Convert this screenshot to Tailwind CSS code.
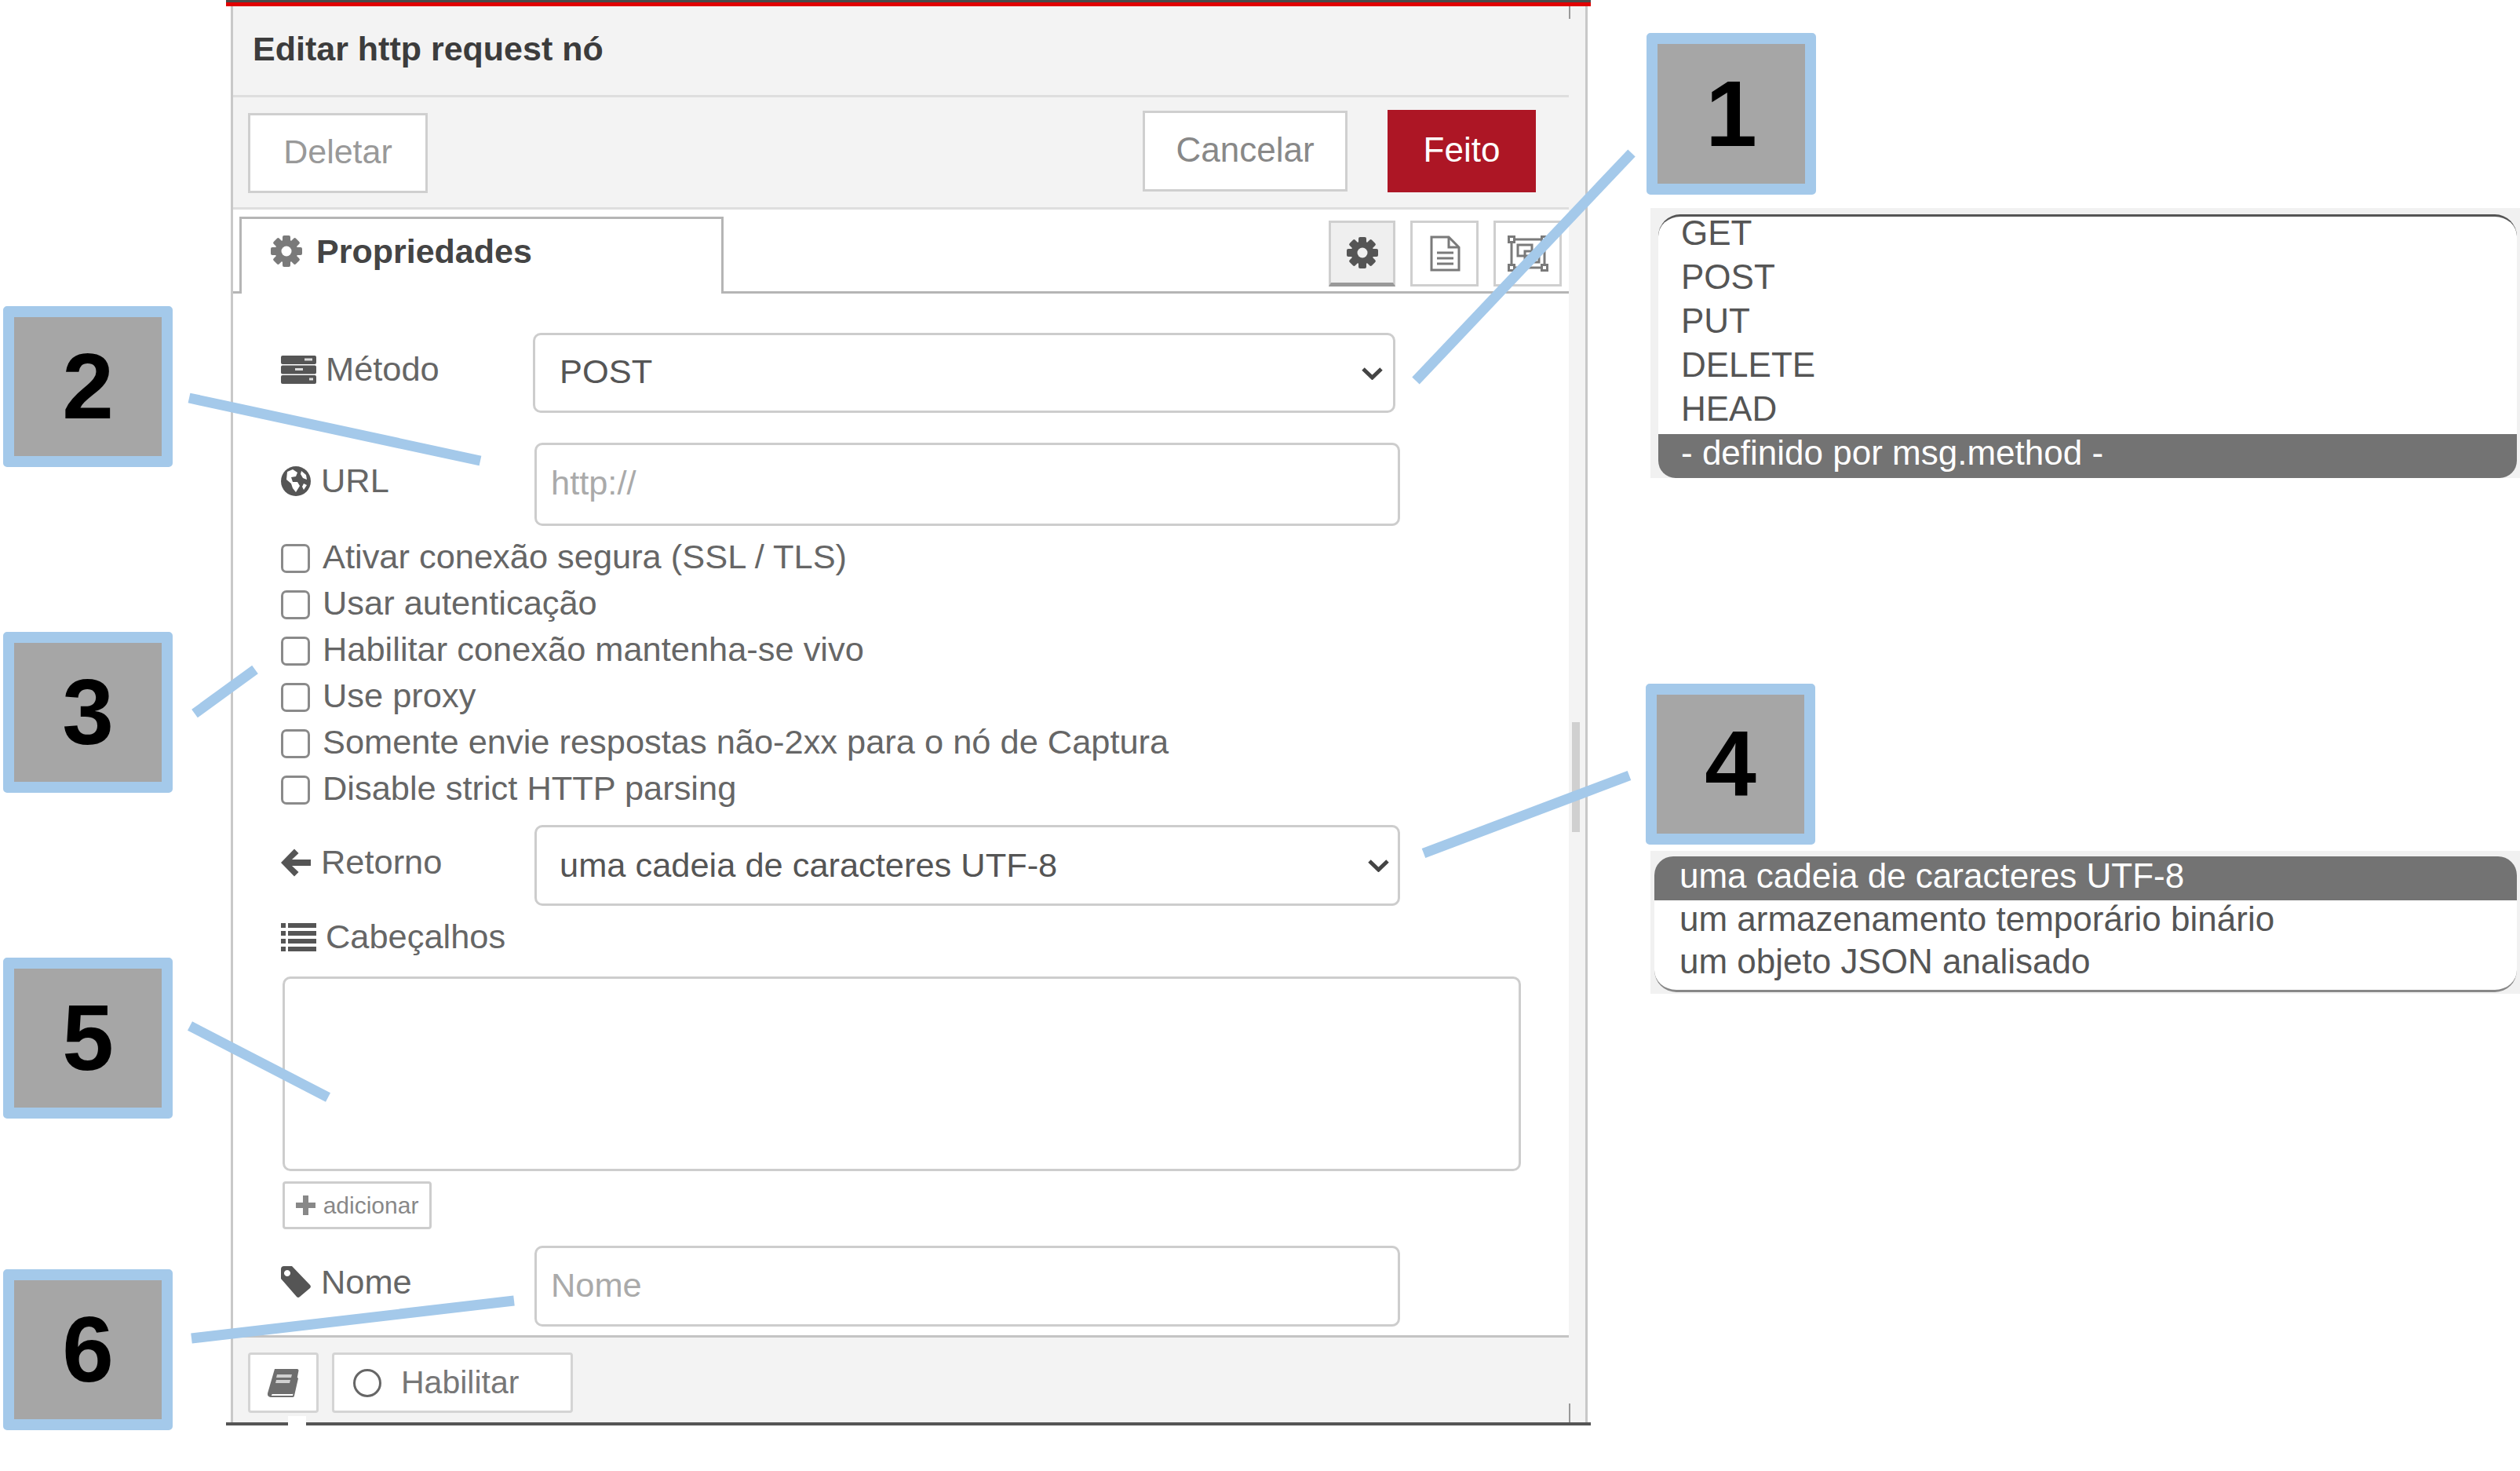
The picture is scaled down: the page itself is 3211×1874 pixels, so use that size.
<!DOCTYPE html>
<html lang="pt">
<head>
<meta charset="utf-8">
<title>Editar http request nó</title>
<script src="https://cdn.jsdelivr.net/npm/@tailwindcss/browser@4"></script>
</head>
<body class="bg-white">
<div class="relative w-[3211px] h-[1874px] overflow-hidden bg-white font-['Liberation_Sans',Arial,sans-serif] text-[43.4px] text-[#666]">

  <!-- Dialog -->
  <div class="absolute left-[288px] top-0 w-[1739px] h-[1816px] flex flex-col">
    <div class="h-[8px] shrink-0 bg-[#e00000] border-t-[3px] border-[#4a4a4a]"></div>
    <div class="relative flex-1 min-h-0 ml-[6px] mr-[4px] flex flex-col bg-[#f3f3f3] border-x-[3px] border-[#c8c8c8]">
      <div class="absolute right-[19px] top-0 w-[2px] h-[16px] bg-[#999]"></div>
      <div class="absolute right-[19px] bottom-0 w-[2px] h-[24px] bg-[#999]"></div>
      <div class="absolute right-[7px] top-[912px] w-[10px] h-[140px] bg-[#d0d0d0]"></div>
      <div class="w-[1702px] flex-1 min-h-0 flex flex-col">
        <!-- Title -->
        <div class="h-[117px] shrink-0 flex items-center pl-[25px] pb-[3px] border-b-[3px] border-[#dedede] font-bold text-[43px] text-[#3c3c3c] -mt-[1px]">Editar http request nó</div>
        <!-- Toolbar -->
        <div class="h-[143px] shrink-0 flex items-start pl-[19px] border-b-[3px] border-[#dedede]">
          <button class="mt-[20px] w-[229px] h-[102px] pb-[3px] bg-white border-[3px] border-[#cfcfcf] text-[43px] text-[#999]">Deletar</button>
          <div class="ml-auto mr-[42px] mt-[17px] flex gap-[51px]">
            <button class="w-[261px] h-[103px] pb-[3px] bg-white border-[3px] border-[#cfcfcf] text-[#888] text-[44px]">Cancelar</button>
            <button class="-mt-[1px] w-[189px] h-[105px] pb-[3px] bg-[#ad1625] text-white text-[44px]">Feito</button>
          </div>
        </div>
        <!-- Tabs -->
        <div class="h-[107px] shrink-0 flex items-end bg-white border-b-[3px] border-[#b5b5b5] pl-[8px]">
          <div class="-mb-[3px] w-[617px] h-[98px] flex items-start pt-[9px] pl-[37px] gap-[18px] bg-white border-x-[3px] border-t-[3px] border-[#b5b5b5] font-bold text-[43px] text-[#444]">
            <svg class="mt-[12px]" width="40" height="40" viewBox="0 0 40 40" fill="#7a7a7a"><g><rect x="15" y="0" width="10" height="40" rx="2"/><rect x="15" y="0" width="10" height="40" rx="2" transform="rotate(45 20 20)"/><rect x="15" y="0" width="10" height="40" rx="2" transform="rotate(90 20 20)"/><rect x="15" y="0" width="10" height="40" rx="2" transform="rotate(135 20 20)"/></g><circle cx="20" cy="20" r="14.5"/><circle cx="20" cy="20" r="6.5" fill="#fff"/></svg>
            <span>Propriedades</span>
          </div>
          <div class="ml-auto mr-[9px] mb-[6px] flex gap-[19px]">
            <div class="w-[85px] h-[84px] flex items-center justify-center bg-[#efefef] border-x-[3px] border-t-[3px] border-b-[5px] border-[#cfcfcf] border-b-[#999]">
              <svg width="40" height="40" viewBox="0 0 40 40" fill="#555"><rect x="15" y="0" width="10" height="40" rx="2"/><rect x="15" y="0" width="10" height="40" rx="2" transform="rotate(45 20 20)"/><rect x="15" y="0" width="10" height="40" rx="2" transform="rotate(90 20 20)"/><rect x="15" y="0" width="10" height="40" rx="2" transform="rotate(135 20 20)"/><circle cx="20" cy="20" r="14.5"/><circle cx="20" cy="20" r="6.5" fill="#efefef"/></svg>
            </div>
            <div class="w-[87px] h-[84px] flex items-center justify-center bg-white border-[3px] border-[#cfcfcf]">
              <svg width="40" height="46" viewBox="0 0 40 46" fill="none" stroke="#7a7a7a" stroke-width="3"><path d="M3 2H25L38 15V44H3Z"/><path d="M25 2V15H38"/><path d="M10 22H31M10 29H31M10 36H31"/></svg>
            </div>
            <div class="w-[87px] h-[84px] flex items-center justify-center bg-white border-[3px] border-[#cfcfcf]">
              <svg width="52" height="46" viewBox="0 0 52 46" fill="none" stroke="#7a7a7a" stroke-width="3"><rect x="5" y="5" width="42" height="36"/><rect x="1.500" y="1.500" width="7" height="7" fill="#fff"/><rect x="43.500" y="1.500" width="7" height="7" fill="#fff"/><rect x="1.500" y="37.500" width="7" height="7" fill="#fff"/><rect x="43.500" y="37.500" width="7" height="7" fill="#fff"/><rect x="13" y="12" width="18" height="14"/><rect x="22" y="20" width="18" height="14"/></svg>
            </div>
          </div>
        </div>
        <!-- Form -->
        <div class="flex-1 min-h-0 bg-white pl-[61px] flex flex-col">
          <div class="mt-[50px] h-[102px] flex items-center">
            <div class="w-[321px] flex items-center gap-[12px] -mt-[8px] text-[#666]">
              <svg width="45" height="36" viewBox="0 0 45 36"><path fill="#555" d="M2 0H43a2 2 0 0 1 2 2V9a2 2 0 0 1-2 2H2a2 2 0 0 1-2-2V2a2 2 0 0 1 2-2ZM2 12.500H43a2 2 0 0 1 2 2V21.500a2 2 0 0 1-2 2H2a2 2 0 0 1-2-2V14.500a2 2 0 0 1 2-2ZM2 25H43a2 2 0 0 1 2 2V34a2 2 0 0 1-2 2H2a2 2 0 0 1-2-2V27a2 2 0 0 1 2-2Z"/><path fill="#ddd" d="M30 3.500H40V6.500H30ZM18 16H28V19H18ZM36 28.500H41V31.500H36Z"/></svg>
              <span>Método</span>
            </div>
            <div class="relative w-[1099px] h-[102px]">
              <select class="appearance-none w-full h-full pl-[31px] pb-[3px] bg-white border-[3px] border-[#cdcdcd] rounded-[10px] text-[#555]"><option>POST</option></select>
              <svg class="absolute right-[16px] top-[44px]" width="27" height="16" viewBox="0 0 27 16" fill="none" stroke="#444" stroke-width="5"><path d="M2 2L13.500 13L25 2"/></svg>
            </div>
          </div>
          <div class="mt-[38px] h-[106px] flex items-center">
            <div class="w-[323px] flex items-center gap-[13px] -mt-[8px]">
              <svg width="38" height="38" viewBox="0 0 38 38"><circle cx="19" cy="19" r="19" fill="#555"/><path fill="#fff" d="M8 7L15 4L21 8L19 13L13 14L15 20L21 20L24 25L19 33L15 28L13 22L7 17ZM26 6L32 11L33 17L28 15L25 10ZM29 22L33 24L29 30L27 26Z"/></svg>
              <span>URL</span>
            </div>
            <input class="w-[1103px] h-[106px] pl-[18px] pb-[3px] bg-white border-[3px] border-[#cdcdcd] rounded-[10px] placeholder:text-[#aaa]" placeholder="http://">
          </div>
          <div class="mt-[12px] flex flex-col">
            <label class="h-[59px] flex items-center gap-[16px] whitespace-nowrap"><input type="checkbox" class="appearance-none w-[37px] h-[37px] shrink-0 bg-white border-[3px] border-[#8a8a8a] rounded-[7px]"><span class="-mt-[4px]">Ativar conexão segura (SSL / TLS)</span></label>
            <label class="h-[59px] flex items-center gap-[16px] whitespace-nowrap"><input type="checkbox" class="appearance-none w-[37px] h-[37px] shrink-0 bg-white border-[3px] border-[#8a8a8a] rounded-[7px]"><span class="-mt-[4px]">Usar autenticação</span></label>
            <label class="h-[59px] flex items-center gap-[16px] whitespace-nowrap"><input type="checkbox" class="appearance-none w-[37px] h-[37px] shrink-0 bg-white border-[3px] border-[#8a8a8a] rounded-[7px]"><span class="-mt-[4px]">Habilitar conexão mantenha-se vivo</span></label>
            <label class="h-[59px] flex items-center gap-[16px] whitespace-nowrap"><input type="checkbox" class="appearance-none w-[37px] h-[37px] shrink-0 bg-white border-[3px] border-[#8a8a8a] rounded-[7px]"><span class="-mt-[4px]">Use proxy</span></label>
            <label class="h-[59px] flex items-center gap-[16px] whitespace-nowrap"><input type="checkbox" class="appearance-none w-[37px] h-[37px] shrink-0 bg-white border-[3px] border-[#8a8a8a] rounded-[7px]"><span class="-mt-[4px]">Somente envie respostas não-2xx para o nó de Captura</span></label>
            <label class="h-[59px] flex items-center gap-[16px] whitespace-nowrap"><input type="checkbox" class="appearance-none w-[37px] h-[37px] shrink-0 bg-white border-[3px] border-[#8a8a8a] rounded-[7px]"><span class="-mt-[4px]">Disable strict HTTP parsing</span></label>
          </div>
          <div class="mt-[15px] h-[103px] flex items-center">
            <div class="w-[323px] flex items-center gap-[13px] -mt-[7px]">
              <svg width="38" height="38" viewBox="0 0 38 38" fill="#555"><path d="M0 19L17 1.500L22.500 7L14 15H38V23H14L22.500 31L17 36.500Z"/></svg>
              <span>Retorno</span>
            </div>
            <div class="relative w-[1103px] h-[103px]">
              <select class="appearance-none w-full h-full pl-[29px] bg-white border-[3px] border-[#cdcdcd] rounded-[10px] text-[#555]"><option>uma cadeia de caracteres UTF-8</option></select>
              <svg class="absolute right-[14px] top-[44px]" width="27" height="16" viewBox="0 0 27 16" fill="none" stroke="#444" stroke-width="5"><path d="M2 2L13.500 13L25 2"/></svg>
            </div>
          </div>
          <div class="mt-[20px] h-[40px] flex items-center gap-[12px]">
            <svg width="45" height="36" viewBox="0 0 45 36" fill="#555"><path d="M0 0H6V6H0ZM9 0H45V6H9ZM0 10H6V16H0ZM9 10H45V16H9ZM0 20H6V26H0ZM9 20H45V26H9ZM0 30H6V36H0ZM9 30H45V36H9Z"/></svg>
            <span>Cabeçalhos</span>
          </div>
          <div class="mt-[30px] ml-[2px] w-[1578px] h-[248px] bg-white border-[3px] border-[#cdcdcd] rounded-[10px]"></div>
          <button class="mt-[13px] ml-[2px] w-[190px] h-[61px] flex items-center justify-center gap-[10px] bg-white border-[3px] border-[#cdcdcd] rounded-[4px] text-[30px] text-[#888]">
            <svg width="25" height="25" viewBox="0 0 25 25" fill="#888"><path d="M9 0H16V9H25V16H16V25H9V16H0V9H9Z"/></svg>
            <span>adicionar</span>
          </button>
          <div class="mt-[21px] h-[103px] flex items-center">
            <div class="w-[323px] flex items-center gap-[13px] -mt-[10px]">
              <svg width="38" height="40" viewBox="0 0 38 40" fill="#555"><path d="M4 0H14L37 24a3 3 0 0 1 0 4L24 39a3 3 0 0 1-4 0L0 16V4a4 4 0 0 1 4-4ZM8 5a4 4 0 1 0 .01 0Z" fill-rule="evenodd"/></svg>
              <span>Nome</span>
            </div>
            <input class="w-[1103px] h-[103px] pl-[18px] pb-[3px] bg-white border-[3px] border-[#cdcdcd] rounded-[10px] placeholder:text-[#aaa]" placeholder="Nome">
          </div>
        </div>
        <!-- Footer -->
        <div class="h-[111px] shrink-0 flex items-start gap-[17px] pl-[19px] pt-[19px] bg-[#f3f3f3] border-t-[3px] border-[#c4c4c4]">
          <button class="w-[90px] h-[77px] flex items-center justify-center bg-white border-[3px] border-[#d4d4d4] rounded-[4px]">
            <svg width="40" height="36" viewBox="0 0 40 36"><path fill="#6e6e6e" d="M9 0H38a2 2 0 0 1 1.500 2L34 30a3 3 0 0 1-3 2H6a2 2 0 0 0-1 2H32l5-24 2 2-5 22a2 2 0 0 1-2 2H4a4 4 0 0 1-4-5Z"/><path fill="#d0d0d0" d="M12 7H31L30 11H11ZM11 14H29L28 18H10Z"/></svg>
          </button>
          <button class="w-[307px] h-[77px] flex items-center pl-[24px] gap-[25px] bg-white border-[3px] border-[#d4d4d4] rounded-[4px] text-[41px] text-[#777]">
            <span class="w-[36px] h-[36px] rounded-full border-[3px] border-[#666]"></span>
            <span>Habilitar</span>
          </button>
        </div>
      </div>
    </div>
    <div class="relative h-[4px] shrink-0 bg-[#555]"><div class="absolute left-[79px] -top-[8px] w-[23px] h-[12px] bg-white"></div></div>
  </div>

  <!-- Dropdown 1 -->
  <div class="absolute left-[2103px] top-[265px] w-[1108px] h-[344px] bg-[#f1f1f1] pl-[10px] pr-[4px] pt-[8px] text-[44px]">
    <div class="h-[336px] overflow-hidden rounded-t-[28px] rounded-b-[22px] bg-white border-t-[3px] border-[#555] text-[#555] flex flex-col">
      <div class="-mt-[7px] h-[56px] shrink-0 flex items-center pl-[29px]">GET</div>
      <div class="h-[56px] shrink-0 flex items-center pl-[29px]">POST</div>
      <div class="h-[56px] shrink-0 flex items-center pl-[29px]">PUT</div>
      <div class="h-[56px] shrink-0 flex items-center pl-[29px]">DELETE</div>
      <div class="h-[56px] shrink-0 flex items-center pl-[29px]">HEAD</div>
      <div class="mt-[4px] flex-1 flex items-center pb-[8px] pl-[29px] leading-[44px] bg-[#737373] text-white whitespace-nowrap">- definido por msg.method -</div>
    </div>
  </div>

  <!-- Dropdown 2 -->
  <div class="absolute left-[2103px] top-[1084px] w-[1108px] h-[182px] bg-[#f1f1f1] pl-[5px] pr-[4px] pt-[7px] text-[44px]">
    <div class="h-[173px] overflow-hidden rounded-t-[24px] rounded-b-[28px] bg-white border-b-[3px] border-[#888] text-[#555] flex flex-col">
      <div class="relative z-10 h-[56px] shrink-0 flex items-center pb-[6px] pl-[32px] bg-[#737373] text-white">uma cadeia de caracteres UTF-8</div>
      <div class="-mt-[4px] h-[55px] shrink-0 flex items-center pl-[32px]">um armazenamento temporário binário</div>
      <div class="-mt-[1px] h-[55px] shrink-0 flex items-center pl-[32px]">um objeto JSON analisado</div>
    </div>
  </div>

  <!-- Callout leader lines -->
  <svg class="absolute inset-0 pointer-events-none" width="3211" height="1874" viewBox="0 0 3211 1874" fill="none" stroke="#a4c9ea" stroke-width="13">
    <path d="M2079 195L1804 485"/>
    <path d="M241 507L612 587"/>
    <path d="M248 909L325 853"/>
    <path d="M2076 988L1814 1087"/>
    <path d="M242 1307L418 1398"/>
    <path d="M244 1705L655 1657"/>
  </svg>

  <!-- Callout boxes -->
  <div class="absolute left-[2098px] top-[42px] w-[216px] h-[206px] flex items-center justify-center rounded-[5px] bg-[#a6a6a6] border-[14px] border-[#a4c9ea] text-[118px] font-bold text-black">1</div>
  <div class="absolute left-[4px] top-[390px] w-[216px] h-[205px] flex items-center justify-center rounded-[5px] bg-[#a6a6a6] border-[14px] border-[#a4c9ea] text-[118px] font-bold text-black">2</div>
  <div class="absolute left-[4px] top-[805px] w-[216px] h-[205px] flex items-center justify-center rounded-[5px] bg-[#a6a6a6] border-[14px] border-[#a4c9ea] text-[118px] font-bold text-black">3</div>
  <div class="absolute left-[2097px] top-[871px] w-[216px] h-[205px] flex items-center justify-center rounded-[5px] bg-[#a6a6a6] border-[14px] border-[#a4c9ea] text-[118px] font-bold text-black">4</div>
  <div class="absolute left-[4px] top-[1220px] w-[216px] h-[205px] flex items-center justify-center rounded-[5px] bg-[#a6a6a6] border-[14px] border-[#a4c9ea] text-[118px] font-bold text-black">5</div>
  <div class="absolute left-[4px] top-[1617px] w-[216px] h-[205px] flex items-center justify-center rounded-[5px] bg-[#a6a6a6] border-[14px] border-[#a4c9ea] text-[118px] font-bold text-black">6</div>
</div>
</body>
</html>
